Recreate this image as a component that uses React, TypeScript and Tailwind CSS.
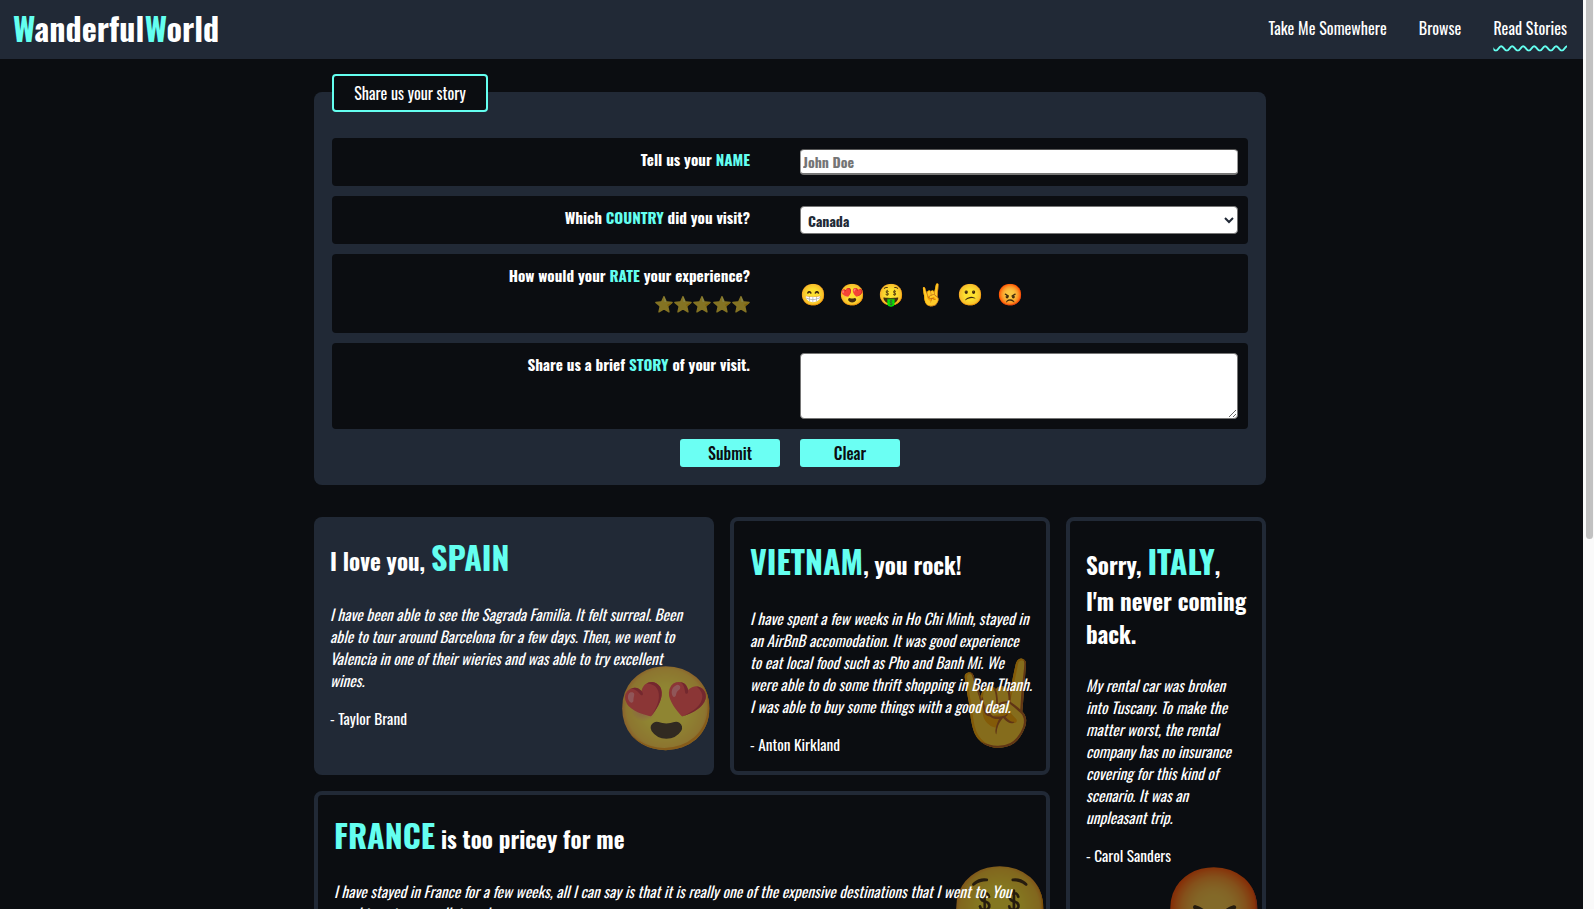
import React from 'react';

function Accent({ children }: { children: React.ReactNode }) {
  return <span className="text-[#64fff0]">{children}</span>;
}

function Title({ children }: { children: React.ReactNode }) {
  return <h2 className="relative mt-px mb-[22px] text-[23px] leading-[1.46] font-bold">{children}</h2>;
}

function Big({ children }: { children: React.ReactNode }) {
  return <span className="text-[32px] font-bold text-[#64fff0]">{children}</span>;
}

function Story({ text, author }: { text: string; author: string }) {
  return (
    <>
      <p className="relative mb-4 text-[15.36px] leading-[22px] italic">{text}</p>
      <p className="relative text-[15.36px] leading-[22px]">- {author}</p>
    </>
  );
}

function Mark({ emoji, className }: { emoji: string; className: string }) {
  return (
    <span className={`absolute font-['Noto_Color_Emoji'] text-[82px] leading-none opacity-50 ${className}`}>
      {emoji}
    </span>
  );
}

function Row({ className, label, children }: { className: string; label: React.ReactNode; children: React.ReactNode }) {
  return (
    <div className={`grid grid-cols-[408px_1fr] gap-x-[50px] rounded-[4px] bg-[#0b0d11] p-2.5 ${className}`}>
      <div className="text-right text-[15.2px] leading-[22px] font-bold">{label}</div>
      <div>{children}</div>
    </div>
  );
}

export default function App() {
  return (
    <div className="flex h-screen overflow-hidden bg-[#0b0d11] font-['Oswald','Open_Sans',sans-serif] text-white">
      <div className="min-w-0 flex-1 overflow-hidden">
        <nav className="flex h-[59px] items-center justify-between bg-[#212936] pr-4 pb-1 pl-[13px]">
          <div className="text-[32px] font-bold">
            <Accent>W</Accent>anderful<Accent>W</Accent>orld
          </div>
          <div className="flex gap-8 text-base tracking-[0.05px]">
            <a>Take Me Somewhere</a>
            <a>Browse</a>
            <a className="underline decoration-[#64fff0] decoration-wavy decoration-2 underline-offset-[10px]">Read Stories</a>
          </div>
        </nav>

        <main className="ml-[314px] w-[952px]">
          <form className="relative mt-[33px] rounded-lg bg-[#212936] px-[18px] pt-[46px] pb-[18px]">
            <div className="absolute -top-[18px] left-[18px] flex h-[38px] w-[156px] items-center justify-center rounded-[4px] border-2 border-[#64fff0] bg-[#0b0d11] text-base">
              Share us your story
            </div>
            <div className="flex flex-col gap-2.5">
              <Row className="h-12" label={<>Tell us your <Accent>NAME</Accent></>}>
                <input
                  placeholder="John Doe"
                  className="mt-px h-[26px] w-full rounded-[4px] border-x border-t border-b-2 border-x-[#999] border-t-[#555] border-b-[#767676] bg-white px-0.5 text-sm font-bold text-[#212936] placeholder:text-[#757575]"
                />
              </Row>
              <Row className="h-12" label={<>Which <Accent>COUNTRY</Accent> did you visit?</>}>
                <select className="h-7 w-full rounded-[4px] border border-[#767676] bg-white pl-[3px] text-sm leading-5 font-bold text-[#212936]">
                  <option>Canada</option>
                </select>
              </Row>
              <Row
                className="h-[79px]"
                label={
                  <>
                    <div>How would your <Accent>RATE</Accent> your experience?</div>
                    <div className="-mr-px mt-[9px] font-['Noto_Color_Emoji'] text-base leading-5 tracking-[-0.5px] opacity-50">⭐⭐⭐⭐⭐</div>
                  </>
                }
              >
                <div className="flex h-full items-center gap-[13.25px] pt-1 font-['Noto_Color_Emoji'] text-[21px] leading-none">
                  <span>😁</span>
                  <span>😍</span>
                  <span>🤑</span>
                  <span>🤘</span>
                  <span>😕</span>
                  <span>😡</span>
                </div>
              </Row>
              <Row className="h-[86px]" label={<>Share us a brief <Accent>STORY</Accent> of your visit.</>}>
                <textarea className="block h-[66px] w-full rounded-[4px] border border-[#767676] bg-white" />
              </Row>
            </div>
            <div className="mt-2.5 flex justify-center gap-5">
              <button type="button" className="h-7 w-[100px] rounded-[3px] bg-[#6bfff3] text-base font-medium text-[#0b0d11]">Submit</button>
              <button type="button" className="h-7 w-[100px] rounded-[3px] bg-[#6bfff3] text-base font-medium text-[#0b0d11]">Clear</button>
            </div>
          </form>

          <section className="mt-8 grid grid-cols-[400px_320px_200px] gap-4">
            <article className="relative rounded-lg bg-[#212936] p-4">
              <Mark emoji="😍" className="-right-[3px] bottom-[25px]" />
              <Title>I love you, <Big>SPAIN</Big></Title>
              <Story
                text="I have been able to see the Sagrada Familia. It felt surreal. Been able to tour around Barcelona for a few days. Then, we went to Valencia in one of their wieries and was able to try excellent wines."
                author="Taylor Brand"
              />
            </article>

            <article className="relative rounded-lg border-4 border-[#212936] py-4 pr-[13px] pl-4">
              <Mark emoji="🤘" className="-right-[2px] bottom-[27px]" />
              <Title><Big>VIETNAM</Big>, you rock!</Title>
              <Story
                text="I have spent a few weeks in Ho Chi Minh, stayed in an AirBnB accomodation. It was good experience to eat local food such as Pho and Banh Mi. We were able to do some thrift shopping in Ben Thanh. I was able to buy some things with a good deal."
                author="Anton Kirkland"
              />
            </article>

            <article className="relative row-span-2 rounded-lg border-4 border-[#212936] py-4 pr-[13px] pl-4">
              <Mark emoji="😡" className="top-[348px] -right-[3px]" />
              <Title>Sorry, <Big>ITALY</Big>, I'm never coming back.</Title>
              <Story
                text="My rental car was broken into Tuscany. To make the matter worst, the rental company has no insurance covering for this kind of scenario. It was an unpleasant trip."
                author="Carol Sanders"
              />
            </article>

            <article className="relative col-span-2 rounded-lg border-4 border-[#212936] p-4">
              <Mark emoji="🤑" className="top-[73px] -right-[5px]" />
              <Title><Big>FRANCE</Big> is too pricey for me</Title>
              <Story
                text="I have stayed in France for a few weeks, all I can say is that it is really one of the expensive destinations that I went to. You need to get your wallet ready."
                author="Jane Doe"
              />
            </article>
          </section>
        </main>
      </div>

      <div className="w-[11px] shrink-0 bg-[#fafafa] pr-px pl-[3px]">
        <div className="h-[539px] rounded-b-[4px] bg-[#c1c1c1]" />
      </div>
    </div>
  );
}
